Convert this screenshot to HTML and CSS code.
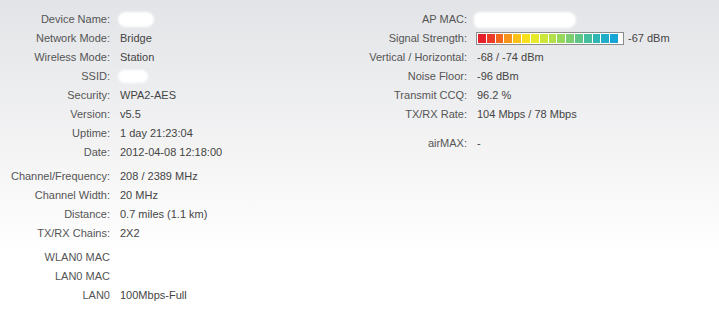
FILE: index.html
```html
<!DOCTYPE html>
<html lang="en">
<head>
  <meta charset="UTF-8" />
  <title>Status</title>
  <link rel="stylesheet" href="styles.css">
</head>
<body>
  <div class="status">
    <div class="coluna esquerda">
      <div class="linha"><span class="rotulo">Device Name:</span><span class="valor"><span class="mancha nome"></span></span></div>
      <div class="linha"><span class="rotulo">Network Mode:</span><span class="valor">Bridge</span></div>
      <div class="linha"><span class="rotulo">Wireless Mode:</span><span class="valor">Station</span></div>
      <div class="linha"><span class="rotulo">SSID:</span><span class="valor"><span class="mancha ssid"></span></span></div>
      <div class="linha"><span class="rotulo">Security:</span><span class="valor">WPA2-AES</span></div>
      <div class="linha"><span class="rotulo">Version:</span><span class="valor">v5.5</span></div>
      <div class="linha"><span class="rotulo">Uptime:</span><span class="valor">1 day 21:23:04</span></div>
      <div class="linha"><span class="rotulo">Date:</span><span class="valor">2012-04-08 12:18:00</span></div>

      <div class="linha separa"><span class="rotulo">Channel/Frequency:</span><span class="valor">208 / 2389 MHz</span></div>
      <div class="linha"><span class="rotulo">Channel Width:</span><span class="valor">20 MHz</span></div>
      <div class="linha"><span class="rotulo">Distance:</span><span class="valor">0.7 miles (1.1 km)</span></div>
      <div class="linha"><span class="rotulo">TX/RX Chains:</span><span class="valor">2X2</span></div>

      <div class="linha separa"><span class="rotulo">WLAN0 MAC</span><span class="valor"></span></div>
      <div class="linha"><span class="rotulo">LAN0 MAC</span><span class="valor"></span></div>
      <div class="linha"><span class="rotulo">LAN0</span><span class="valor">100Mbps-Full</span></div>
    </div>

    <div class="coluna direita">
      <div class="linha"><span class="rotulo">AP MAC:</span><span class="valor"><span class="mancha mac"></span></span></div>
      <div class="linha">
        <span class="rotulo">Signal Strength:</span>
        <span class="valor">
          <span class="barra">
            <i style="background:#e5202b"></i><i style="background:#ec3b26"></i><i style="background:#f2661e"></i><i style="background:#f7941b"></i>
            <i style="background:#fbc118"></i><i style="background:#f8e11c"></i><i style="background:#e6ea2a"></i><i style="background:#cde63a"></i>
            <i style="background:#b2df4a"></i><i style="background:#97d85c"></i><i style="background:#7ccf70"></i><i style="background:#5fc688"></i>
            <i style="background:#45be9e"></i><i style="background:#2fb5b4"></i><i style="background:#1fadc8"></i><i style="background:#17a5d8"></i>
          </span>
          -67 dBm
        </span>
      </div>
      <div class="linha"><span class="rotulo">Vertical / Horizontal:</span><span class="valor">-68 / -74 dBm</span></div>
      <div class="linha"><span class="rotulo">Noise Floor:</span><span class="valor">-96 dBm</span></div>
      <div class="linha"><span class="rotulo">Transmit CCQ:</span><span class="valor">96.2 %</span></div>
      <div class="linha"><span class="rotulo">TX/RX Rate:</span><span class="valor">104 Mbps / 78 Mbps</span></div>

      <div class="linha separa-maior"><span class="rotulo">airMAX:</span><span class="valor">-</span></div>
    </div>
  </div>
</body>
</html>
```

FILE: styles.css
```css
body {
  margin: 0;
  font-family: "Liberation Sans", Arial, sans-serif;
  font-size: 11px;
  color: #444;
  background: linear-gradient(to bottom, #e2e4e7 0%, #f3f3f4 45%, #ffffff 80%);
  height: 319px;
}
.status {
  display: flex;
  padding-top: 10px;
}
.coluna.esquerda {
  width: 355px;
}
.linha {
  display: flex;
  align-items: center;
  height: 19px;
  line-height: 19px;
}
.linha.separa {
  margin-top: 5px;
}
.linha.separa-maior {
  margin-top: 10px;
}
.rotulo {
  text-align: right;
  color: #555;
  padding-right: 3px;
  box-sizing: border-box;
  white-space: nowrap;
}
.esquerda .rotulo {
  width: 113px;
}
.direita .rotulo {
  width: 115px;
}
.valor {
  margin-left: 7px;
  display: flex;
  align-items: center;
  white-space: nowrap;
}
.mancha {
  display: inline-block;
  background: #fff;
  border-radius: 8px;
  filter: blur(1px);
}
.mancha.nome {
  width: 36px;
  height: 15px;
  margin-left: -2px;
}
.mancha.ssid {
  width: 30px;
  height: 13px;
  margin-left: -2px;
}
.mancha.mac {
  width: 102px;
  height: 16px;
  margin-left: -3px;
  border-radius: 6px 9px 9px 6px;
}
.barra {
  display: flex;
  gap: 1px;
  width: 148px;
  height: 13px;
  box-sizing: border-box;
  border: 1px solid #8c8c8c;
  background: #fff;
  padding: 1px 5px 1px 1px;
  margin-left: -1px;
  margin-right: 4px;
}
.barra i {
  flex: 1;
  display: block;
}
```
